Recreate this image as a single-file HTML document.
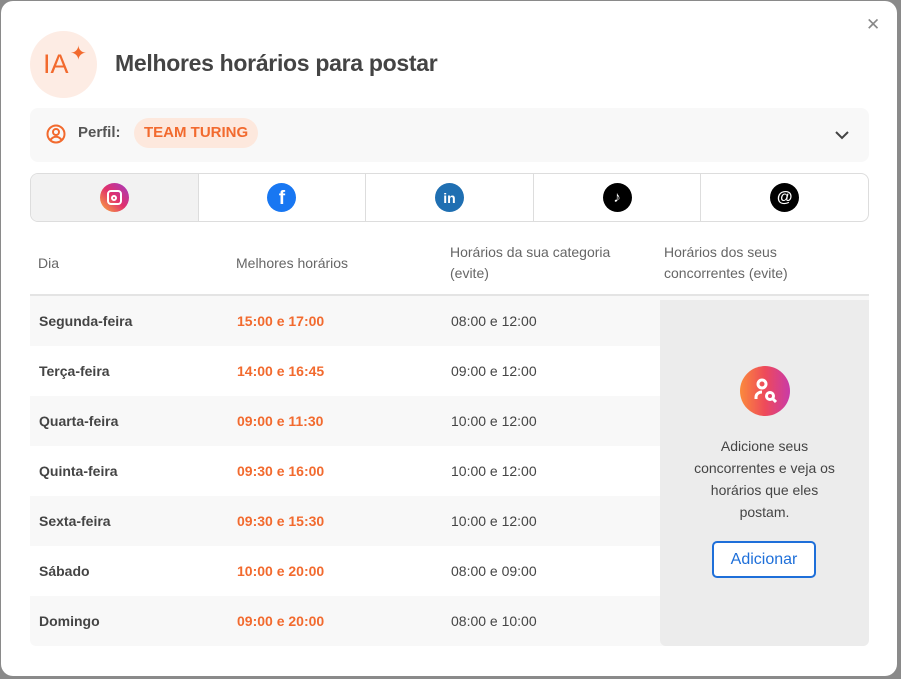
<!DOCTYPE html>
<html><head><meta charset="utf-8"><style>
*{box-sizing:border-box;margin:0;padding:0}
body{width:901px;height:679px;background:#8a8a8a;font-family:"Liberation Sans",sans-serif;position:relative;overflow:hidden}
.dlg{position:absolute;left:1px;top:1px;width:896px;height:675px;background:#fff;border-radius:12px}
.in{position:absolute;left:-1px;top:-1px;width:901px;height:679px}
.abs{position:absolute}
.close{left:866px;top:15px;font-size:17px;color:#888}
.ia{left:30px;top:31px;width:67px;height:67px;border-radius:50%;background:#fdece4;color:#f26a2e;font-size:27px;line-height:67px;padding-left:13px}
.title{left:115px;top:50px;font-size:23px;font-weight:bold;color:#444;letter-spacing:-0.3px}
.perfil{left:30px;top:108px;width:839px;height:54px;background:#f8f8f8;border-radius:8px}
.tabs{left:30px;top:173px;width:839px;height:49px;border:1px solid #ddd;border-radius:8px;display:flex;overflow:hidden}
.tabs>div{flex:1;border-right:1px solid #ddd;display:flex;align-items:center;justify-content:center}
.tabs>div:last-child{border-right:none}
.ic{width:29px;height:29px;flex:none;border-radius:50%;display:flex;align-items:center;justify-content:center;color:#fff;font-weight:bold}
.hdr{top:235px;font-size:14px;color:#666;line-height:21px}
.row{left:30px;width:839px;height:50px;font-size:14px;color:#444}
.row span{position:absolute;top:17px}
.d{left:9px;font-weight:bold}
.m{left:207px;color:#f26a2e;font-weight:bold}
.c{left:421px}
.panel{left:660px;top:300px;width:209px;height:346px;background:#ececec;border-radius:0 0 6px 6px}
</style></head><body>
<div class="dlg"><div class="in">
<div class="abs close">✕</div>
<div class="abs ia">IA<span style="position:absolute;left:40px;top:-10px;font-size:20px">✦</span></div>
<div class="abs title">Melhores horários para postar</div>
<div class="abs perfil">
 <svg class="abs" style="left:16px;top:16px" width="20" height="20" viewBox="0 0 20 20" fill="none" stroke="#f26a2e" stroke-width="2"><circle cx="10" cy="10" r="8.5"/><circle cx="10" cy="8" r="3"/><path d="M4.5 16c1.5-2.5 3.5-3.3 5.5-3.3s4 .8 5.5 3.3"/></svg>
 <span class="abs" style="left:48px;top:16px;font-size:15px;font-weight:bold;color:#555">Perfil:</span>
 <span class="abs" style="left:104px;top:10px;height:30px;padding:0 10px;line-height:30px;border-radius:15px;background:#fde8dd;color:#f26a2e;font-weight:bold;font-size:15px">TEAM TURING</span>
 <svg class="abs" style="left:804px;top:19px" width="16" height="16" viewBox="0 0 16 16" fill="none" stroke="#444" stroke-width="2"><path d="M2 5l6 6 6-6"/></svg>
</div>
<div class="abs tabs">
 <div style="background:#f2f2f2"><div class="ic" style="background:linear-gradient(45deg,#fbb03b,#e1306c,#a23cc4)"><div style="width:15px;height:15px;border:2px solid #fff;border-radius:4px;display:flex;align-items:center;justify-content:center"><div style="width:6px;height:6px;border:2px solid #fff;border-radius:50%"></div></div></div></div>
 <div><div class="ic" style="background:#1877f2;font-size:19px;padding-top:3px">f</div></div>
 <div><div class="ic" style="background:#1f6fb2;font-size:14px">in</div></div>
 <div><div class="ic" style="background:#000;font-size:15px">♪</div></div>
 <div><div class="ic" style="background:#000;font-size:16px">@</div></div>
</div>
<div class="abs hdr" style="left:38px;top:253px">Dia</div>
<div class="abs hdr" style="left:236px;top:253px">Melhores horários</div>
<div class="abs hdr" style="left:450px;top:242px">Horários da sua categoria<br>(evite)</div>
<div class="abs hdr" style="left:664px;top:242px">Horários dos seus<br>concorrentes (evite)</div>
<div class="abs" style="left:30px;top:294px;width:839px;height:2px;background:#e4e4e4"></div>
<div class="abs row" style="top:296px;background:#f8f8f8"><span class="d">Segunda-feira</span><span class="m">15:00 e 17:00</span><span class="c">08:00 e 12:00</span></div>
<div class="abs row" style="top:346px"><span class="d">Terça-feira</span><span class="m">14:00 e 16:45</span><span class="c">09:00 e 12:00</span></div>
<div class="abs row" style="top:396px;background:#f8f8f8"><span class="d">Quarta-feira</span><span class="m">09:00 e 11:30</span><span class="c">10:00 e 12:00</span></div>
<div class="abs row" style="top:446px"><span class="d">Quinta-feira</span><span class="m">09:30 e 16:00</span><span class="c">10:00 e 12:00</span></div>
<div class="abs row" style="top:496px;background:#f8f8f8"><span class="d">Sexta-feira</span><span class="m">09:30 e 15:30</span><span class="c">10:00 e 12:00</span></div>
<div class="abs row" style="top:546px"><span class="d">Sábado</span><span class="m">10:00 e 20:00</span><span class="c">08:00 e 09:00</span></div>
<div class="abs row" style="top:596px;background:#f8f8f8;border-radius:0 0 6px 6px"><span class="d">Domingo</span><span class="m">09:00 e 20:00</span><span class="c">08:00 e 10:00</span></div>
<div class="abs panel">
 <div class="abs" style="left:80px;top:66px;width:50px;height:50px;border-radius:50%;background:linear-gradient(90deg,#fb8a3c,#ee4a5a,#c93aa8)">
  <svg width="50" height="50" viewBox="0 0 50 50" fill="none" stroke="#fff" stroke-width="3"><circle cx="22" cy="18" r="4"/><path d="M16 33v-2c0-3 3-5 6-5"/><circle cx="30" cy="30" r="3.5"/><path d="M33 33l3 3"/></svg>
 </div>
 <div class="abs" style="left:0;top:135px;width:209px;text-align:center;font-size:14px;line-height:22px;color:#444">Adicione seus<br>concorrentes e veja os<br>horários que eles<br>postam.</div>
 <div class="abs" style="left:52px;top:241px;width:104px;height:37px;border:2px solid #1e6fd9;border-radius:5px;background:#fff;color:#1e6fd9;font-size:16px;text-align:center;line-height:33px">Adicionar</div>
</div>
</div></div>
</body></html>
